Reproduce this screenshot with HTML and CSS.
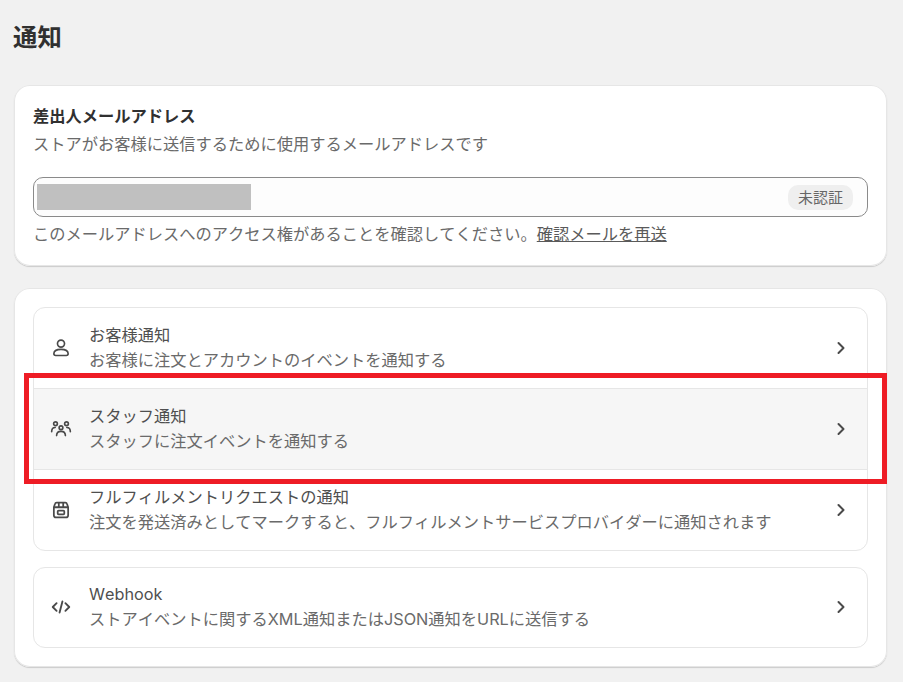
FILE: index.html
```html
<!DOCTYPE html>
<html lang="ja">
<head>
<meta charset="utf-8">
<title>通知</title>
<link rel="stylesheet" href="styles.css">
</head>
<body>
<main class="page">
  <h1 class="title">通知</h1>
  <section class="card sender">
    <h2 class="sender-title">差出人メールアドレス</h2>
    <p class="muted">ストアがお客様に送信するために使用するメールアドレスです</p>
    <div class="field">
      <div class="redaction"></div>
      <span class="badge">未認証</span>
    </div>
    <p class="muted note">このメールアドレスへのアクセス権があることを確認してください。<a class="link" href="#">確認メールを再送</a></p>
  </section>
  <section class="card lists">
    <div class="group">
      <div class="row">
        <svg class="icon" viewBox="0 0 20 20" fill="none" stroke="currentColor" stroke-width="1.5" stroke-linejoin="round"><circle cx="10" cy="6" r="3.2"/><path d="M3.500 15.300c0-2.700 2.500-4 6.500-4s6.500 1.300 6.500 4c0 1-.7 1.500-1.600 1.500H5.100c-.9 0-1.600-.5-1.600-1.500z"/></svg>
        <div class="text"><div class="name">お客様通知</div><div class="desc">お客様に注文とアカウントのイベントを通知する</div></div>
        <svg class="chev" viewBox="0 0 20 20" fill="none" stroke="currentColor" stroke-width="2" stroke-linecap="round" stroke-linejoin="round"><path d="M7.500 5l5 5-5 5"/></svg>
      </div>
      <div class="row active">
        <svg class="icon" viewBox="0 0 20 20" fill="none" stroke="currentColor" stroke-width="1.500" stroke-linecap="round"><circle cx="5" cy="5.200" r="1.700"/><circle cx="15" cy="5.200" r="1.700"/><circle cx="10" cy="8.800" r="1.700"/><path d="M1.500 12.500c0-2.600 1.300-3.900 3.200-3.900M18.500 12.500c0-2.600-1.300-3.900-3.200-3.900M6 16c0-2.500 1.600-3.900 4-3.900s4 1.400 4 3.900"/></svg>
        <div class="text"><div class="name">スタッフ通知</div><div class="desc">スタッフに注文イベントを通知する</div></div>
        <svg class="chev" viewBox="0 0 20 20" fill="none" stroke="currentColor" stroke-width="2" stroke-linecap="round" stroke-linejoin="round"><path d="M7.500 5l5 5-5 5"/></svg>
      </div>
      <div class="row">
        <svg class="icon" viewBox="0 0 20 20" fill="none" stroke="currentColor" stroke-width="1.600" stroke-linejoin="round"><path d="M3.500 7.500l1-3c.2-.7.8-1.200 1.500-1.200h8c.7 0 1.300.5 1.500 1.200l1 3v7.200c0 1.100-.9 2-2 2H5.500c-1.100 0-2-.9-2-2z"/><path d="M3.500 7.500h13M8 3.500v4M12 3.500v4"/><rect x="7" y="10.500" width="6" height="3.400" rx=".8"/></svg>
        <div class="text"><div class="name">フルフィルメントリクエストの通知</div><div class="desc">注文を発送済みとしてマークすると、フルフィルメントサービスプロバイダーに通知されます</div></div>
        <svg class="chev" viewBox="0 0 20 20" fill="none" stroke="currentColor" stroke-width="2" stroke-linecap="round" stroke-linejoin="round"><path d="M7.500 5l5 5-5 5"/></svg>
      </div>
    </div>
    <div class="group">
      <div class="row">
        <svg class="icon" viewBox="0 0 20 20" fill="none" stroke="currentColor" stroke-width="1.700" stroke-linecap="round" stroke-linejoin="round"><path d="M6 6.500L2.500 10 6 13.500M14 6.500l3.500 3.500-3.500 3.500M11.300 5l-2.600 10"/></svg>
        <div class="text"><div class="name">Webhook</div><div class="desc">ストアイベントに関するXML通知またはJSON通知をURLに送信する</div></div>
        <svg class="chev" viewBox="0 0 20 20" fill="none" stroke="currentColor" stroke-width="2" stroke-linecap="round" stroke-linejoin="round"><path d="M7.500 5l5 5-5 5"/></svg>
      </div>
    </div>
  </section>
</main>
<div class="highlight"></div>
</body>
</html>
```
FILE: styles.css
```css
* { box-sizing: border-box; }
html, body { margin: 0; height: 100%; }
body {
  background: #f1f1f1;
  color: #303030;
  font-family: Inter, "Noto Sans CJK JP", "Noto Sans", sans-serif;
  font-size: 16.25px;
  font-kerning: none;
  line-height: 26px;
  overflow: hidden;
  position: relative;
}
.page { padding: 0 16px 0 14px; }
.title {
  margin: 0 0 0 -1px;
  padding: 20px 0 30px;
  font-size: 24.4px;
  line-height: 35px;
  font-weight: 700;
  color: #303030;
}
.card {
  background: #fff;
  border-radius: 16px;
  box-shadow: 0 1px 1px rgba(0,0,0,.16), inset 0 0 0 1px #e6e6e6;
  padding: 19px;
}
.sender { height: 181px; padding-top: 18px; }
.sender-title { margin: 0 0 1px; font-size: 16.25px; line-height: 26px; font-weight: 700; }
.muted { margin: 0; color: #6a6a6a; line-height: 28px; }
.note { margin-top: 3px; }
.field {
  margin-top: 19px;
  height: 40px;
  display: flex;
  align-items: center;
  justify-content: space-between;
  border: 1px solid #8a8a8a;
  border-radius: 10px;
  background: #fdfdfd;
  padding: 0 14px 0 3px;
}
.redaction { width: 214px; height: 26px; background: #c0c0c0; }
.badge {
  background: #efefef;
  color: #666;
  border-radius: 10px;
  font-size: 15px;
  line-height: 25px;
  height: 25px;
  padding: 0 10px;
}
.link { color: #5a5a5a; text-decoration: underline; }
.lists { margin-top: 22px; height: 379px; display: flex; flex-direction: column; gap: 16px; }
.group { border: 1px solid #e6e6e6; border-radius: 12px; overflow: hidden; background: #fff; flex: none; }
.row {
  height: 81px;
  display: flex;
  align-items: center;
  padding: 0 16px 0 16px;
  border-top: 1px solid #e6e6e6;
}
.row:first-child { border-top: 0; height: 80px; }
.group:last-child .row { height: 79px; padding-bottom: 2px; }
.row.active { background: #f6f6f6; }
.icon { width: 22px; height: 22px; color: #4a4a4a; flex: none; }
.chev { width: 20px; height: 20px; color: #4a4a4a; flex: none; margin-left: auto; }
.text { margin-left: 17px; }
.name { color: #4f4f4f; line-height: 25px; }
.desc { color: #6a6a6a; line-height: 25px; }
.highlight {
  position: absolute;
  left: 24px;
  top: 373px;
  width: 863px;
  height: 111px;
  border: 5px solid #ee1c25;
}
```
